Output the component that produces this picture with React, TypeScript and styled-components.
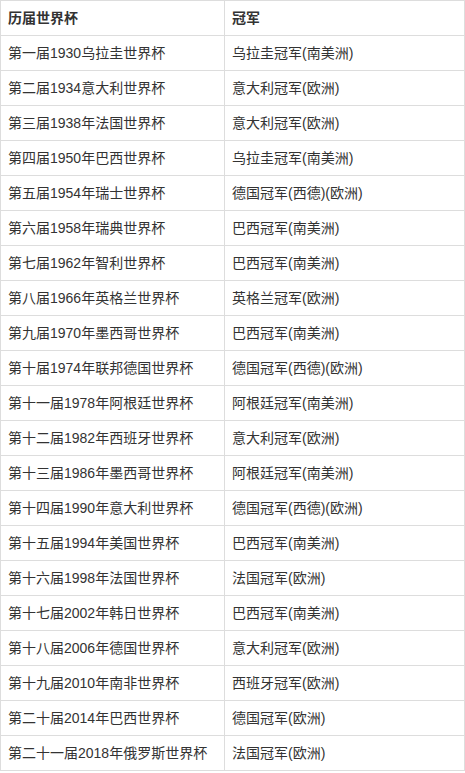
import React from "react";
import styled, { createGlobalStyle } from "styled-components";

const Global = createGlobalStyle`
  html, body { margin: 0; padding: 0; background: #fff; }
  body { font-family: "Liberation Sans", "Noto Sans CJK SC", sans-serif; }
`;

const Table = styled.div`
  display: grid;
  grid-template-columns: 224px 240px;
  width: 465px;
  box-sizing: border-box;
  border-top: 1px solid #dddddd;
  border-left: 1px solid #dddddd;
`;

const Cell = styled.div<{ $head?: boolean }>`
  box-sizing: border-box;
  height: 35px;
  display: flex;
  align-items: center;
  padding: 0 0 2px 7px;
  border-right: 1px solid #dddddd;
  border-bottom: 1px solid #dddddd;
  font-size: 14px;
  color: #333333;
  font-weight: ${(p) => (p.$head ? 700 : 400)};
  white-space: nowrap;
`;

const rows: [string, string][] = [
  ["第一届1930乌拉圭世界杯", "乌拉圭冠军(南美洲)"],
  ["第二届1934意大利世界杯", "意大利冠军(欧洲)"],
  ["第三届1938年法国世界杯", "意大利冠军(欧洲)"],
  ["第四届1950年巴西世界杯", "乌拉圭冠军(南美洲)"],
  ["第五届1954年瑞士世界杯", "德国冠军(西德)(欧洲)"],
  ["第六届1958年瑞典世界杯", "巴西冠军(南美洲)"],
  ["第七届1962年智利世界杯", "巴西冠军(南美洲)"],
  ["第八届1966年英格兰世界杯", "英格兰冠军(欧洲)"],
  ["第九届1970年墨西哥世界杯", "巴西冠军(南美洲)"],
  ["第十届1974年联邦德国世界杯", "德国冠军(西德)(欧洲)"],
  ["第十一届1978年阿根廷世界杯", "阿根廷冠军(南美洲)"],
  ["第十二届1982年西班牙世界杯", "意大利冠军(欧洲)"],
  ["第十三届1986年墨西哥世界杯", "阿根廷冠军(南美洲)"],
  ["第十四届1990年意大利世界杯", "德国冠军(西德)(欧洲)"],
  ["第十五届1994年美国世界杯", "巴西冠军(南美洲)"],
  ["第十六届1998年法国世界杯", "法国冠军(欧洲)"],
  ["第十七届2002年韩日世界杯", "巴西冠军(南美洲)"],
  ["第十八届2006年德国世界杯", "意大利冠军(欧洲)"],
  ["第十九届2010年南非世界杯", "西班牙冠军(欧洲)"],
  ["第二十届2014年巴西世界杯", "德国冠军(欧洲)"],
  ["第二十一届2018年俄罗斯世界杯", "法国冠军(欧洲)"],
];

export default function App() {
  return (
    <>
      <Global />
      <Table>
        <Cell $head>历届世界杯</Cell>
        <Cell $head>冠军</Cell>
        {rows.map(([a, b], i) => (
          <React.Fragment key={i}>
            <Cell>{a}</Cell>
            <Cell>{b}</Cell>
          </React.Fragment>
        ))}
      </Table>
    </>
  );
}
